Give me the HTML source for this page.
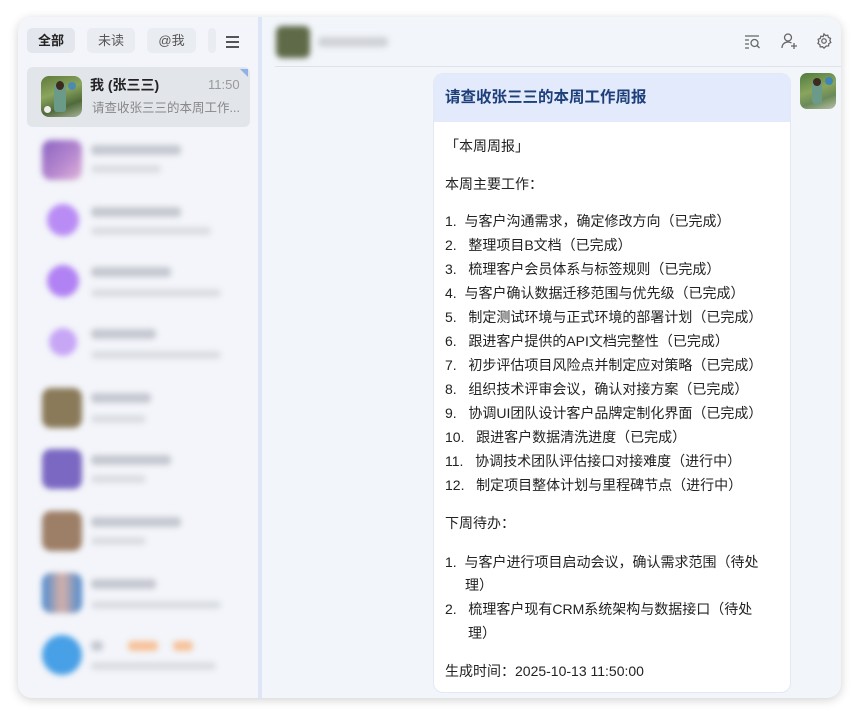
<!DOCTYPE html>
<html><head><meta charset="utf-8"><style>
*{margin:0;padding:0;box-sizing:border-box}
body{width:859px;height:716px;background:#fff;font-family:"Liberation Sans","Noto Sans CJK SC",sans-serif;position:relative;overflow:hidden}
.win{position:absolute;left:18px;top:17px;width:823px;height:681px;border-radius:14px;background:#f2f5fa;box-shadow:0 2px 10px rgba(0,0,0,.18);overflow:hidden}
.abs{position:absolute}
.tab{position:absolute;top:11px;height:25px;border-radius:5px;background:#e9ecf1;font-size:13px;color:#555;text-align:center;line-height:25px}
.bl{filter:blur(3px)}
.av{position:absolute;left:24px;width:40px;height:40px;border-radius:9px}
.ln1{position:absolute;left:73px;height:10px;border-radius:4px;background:#c5c8d0}
.ln2{position:absolute;left:73px;height:8px;border-radius:4px;background:#dadde3}
.t{position:absolute;font-size:14px;color:#222;white-space:nowrap;line-height:20px}
</style></head><body>
<div class="win">
  <div class="abs" style="left:0;top:0;width:240px;height:681px;background:#f3f5fa"></div>
  <div class="abs" style="left:240px;top:0;width:4px;height:681px;background:#dde5f7"></div>
  <div class="tab" style="left:9px;width:48px;background:#e3e6ec;color:#222;font-weight:bold">全部</div>
  <div class="tab" style="left:69px;width:48px">未读</div>
  <div class="tab" style="left:129px;width:49px">@我</div>
  <div class="tab" style="left:190px;width:8px"></div>
  <div class="abs" style="left:208px;top:19px;width:13px">
    <div style="height:1.5px;background:#555;margin-bottom:3.5px"></div><div style="height:1.5px;background:#555;margin-bottom:3.5px"></div><div style="height:1.5px;background:#555"></div>
  </div>
  <div class="abs" style="left:9px;top:50px;width:223px;height:60px;border-radius:6px;background:#e2e5ea"></div>
  <div class="abs" style="left:222px;top:52px;width:0;height:0;border-left:8px solid transparent;border-top:8px solid #8fb0e8"></div>
  <div class="abs" style="left:23px;top:59px;width:41px;height:41px;border-radius:8px;background:linear-gradient(160deg,#5e7a3c,#8aa55c 40%,#4f6a3a 70%,#a8b59a);overflow:hidden">
    <div class="abs" style="left:13px;top:6px;width:12px;height:30px;border-radius:6px 6px 3px 3px;background:#6c9a88"></div>
    <div class="abs" style="left:15px;top:5px;width:8px;height:9px;border-radius:50%;background:#3c2a20"></div>
    <div class="abs" style="left:27px;top:6px;width:8px;height:8px;border-radius:50%;background:#4c8ab0"></div>
    <div class="abs" style="left:3px;top:30px;width:7px;height:7px;border-radius:50%;background:#eee"></div>
  </div>
  <div class="abs" style="left:72px;top:58px;font-size:14px;font-weight:bold;color:#222">我 (张三三)</div>
  <div class="abs" style="left:190px;top:60px;font-size:13px;color:#999">11:50</div>
  <div class="abs" style="left:74px;top:80px;font-size:12.5px;color:#888">请查收张三三的本周工作...</div>
  <div class="bl">
    <div class="av" style="top:123px;background:linear-gradient(135deg,#8a63c0,#b98ad0 60%,#e0b8d8)"></div>
    <div class="ln1" style="top:128px;width:90px"></div><div class="ln2" style="top:148px;width:70px"></div>
    <div class="av" style="top:187px;left:29px;width:32px;height:32px;border-radius:50%;background:#b98cf5"></div>
    <div class="ln1" style="top:190px;width:90px"></div><div class="ln2" style="top:210px;width:120px"></div>
    <div class="av" style="top:248px;left:29px;width:32px;height:32px;border-radius:50%;background:#b182f3"></div>
    <div class="ln1" style="top:250px;width:80px"></div><div class="ln2" style="top:272px;width:130px"></div>
    <div class="av" style="top:311px;left:31px;width:28px;height:28px;border-radius:50%;background:#c7a6f6"></div>
    <div class="ln1" style="top:312px;width:65px"></div><div class="ln2" style="top:334px;width:130px"></div>
    <div class="av" style="top:371px;background:#8a7a5a"></div>
    <div class="ln1" style="top:376px;width:60px"></div><div class="ln2" style="top:398px;width:55px"></div>
    <div class="av" style="top:432px;background:#7b68c2"></div>
    <div class="ln1" style="top:438px;width:80px"></div><div class="ln2" style="top:458px;width:55px"></div>
    <div class="av" style="top:494px;background:#9d7f68"></div>
    <div class="ln1" style="top:500px;width:90px"></div><div class="ln2" style="top:520px;width:55px"></div>
    <div class="av" style="top:556px;background:linear-gradient(90deg,#4a8ad0,#d7b0a8 50%,#4a8ad0)"></div>
    <div class="ln1" style="top:562px;width:65px"></div><div class="ln2" style="top:584px;width:130px"></div>
    <div class="av" style="top:618px;border-radius:50%;background:#48a0e6"></div>
    <div class="ln1" style="top:624px;width:12px"></div>
    <div class="ln1" style="left:110px;top:624px;width:30px;background:#f7c29a"></div>
    <div class="ln1" style="left:155px;top:624px;width:20px;background:#f7c29a"></div>
    <div class="ln2" style="top:645px;width:125px"></div>
  </div>
  <div class="abs bl" style="left:258px;top:9px;width:34px;height:32px;border-radius:6px;background:#5e6a48"></div>
  <div class="abs bl" style="left:300px;top:20px;width:70px;height:10px;border-radius:4px;background:#cfd2d8"></div>
  <div class="abs" style="left:257px;top:49px;width:566px;height:1px;background:#dfe2e8"></div>
  <svg class="abs" style="left:725px;top:16px" width="20" height="18" viewBox="0 0 20 18" fill="none" stroke="#666" stroke-width="1.3">
    <path d="M2 3h14M2 7h4M2 11h4M2 15h4"/><circle cx="11.5" cy="10" r="3.5"/><path d="M14 12.5l2.5 2.5"/></svg>
  <svg class="abs" style="left:762px;top:15px" width="18" height="18" viewBox="0 0 18 18" fill="none" stroke="#666" stroke-width="1.3">
    <circle cx="8" cy="5.5" r="3.5"/><path d="M2 16c0-4 3-6 6-6 1.5 0 2.5.4 3.5 1"/><path d="M14 11v6M11 14h6"/></svg>
  <svg class="abs" style="left:797px;top:15px" width="18" height="18" viewBox="0 0 24 24" fill="none" stroke="#666" stroke-width="1.7">
    <circle cx="12" cy="12" r="3"/><path d="M12 2.5l2 2.3 3-.5.9 2.9 2.8 1.3-.9 2.9 1.3 2.6-2.6 1.5-.4 3-3 .2L12 21.5l-2-1.9-3 .2-.5-3-2.6-1.5 1.2-2.7-.9-2.8 2.8-1.3.9-2.9 3 .5z"/></svg>
  <div class="abs" style="left:782px;top:56px;width:36px;height:36px;border-radius:7px;background:linear-gradient(160deg,#4f7a40,#8aa55c 45%,#6a8a5a 70%,#b8c0a8);overflow:hidden">
    <div class="abs" style="left:12px;top:6px;width:10px;height:26px;border-radius:5px;background:#6c9a88"></div>
    <div class="abs" style="left:13px;top:5px;width:8px;height:8px;border-radius:50%;background:#3c2a20"></div>
    <div class="abs" style="left:25px;top:4px;width:8px;height:8px;border-radius:50%;background:#3f86b8"></div>
  </div>
  <div class="abs" style="left:415px;top:56px;width:358px;height:620px;border-radius:10px;background:#fff;overflow:hidden;border:1px solid #e3e8f3">
    <div style="height:48px;background:#e3eafc;padding-left:11px;line-height:48px;font-size:15.5px;font-weight:bold;color:#1d3f7a">请查收张三三的本周工作周报</div>
  </div>
  <div class="t" style="left:427px;top:119px">「本周周报」</div>
  <div class="t" style="left:427px;top:157px">本周主要工作：</div>
  <div class="t" style="left:427px;top:194px">1.&nbsp;&nbsp;与客户沟通需求，确定修改方向（已完成）</div>
  <div class="t" style="left:427px;top:218px">2.&nbsp;&nbsp; 整理项目B文档（已完成）</div>
  <div class="t" style="left:427px;top:242px">3.&nbsp;&nbsp; 梳理客户会员体系与标签规则（已完成）</div>
  <div class="t" style="left:427px;top:266px">4.&nbsp;&nbsp;与客户确认数据迁移范围与优先级（已完成）</div>
  <div class="t" style="left:427px;top:290px">5.&nbsp;&nbsp; 制定测试环境与正式环境的部署计划（已完成）</div>
  <div class="t" style="left:427px;top:314px">6.&nbsp;&nbsp; 跟进客户提供的API文档完整性（已完成）</div>
  <div class="t" style="left:427px;top:338px">7.&nbsp;&nbsp; 初步评估项目风险点并制定应对策略（已完成）</div>
  <div class="t" style="left:427px;top:362px">8.&nbsp;&nbsp; 组织技术评审会议，确认对接方案（已完成）</div>
  <div class="t" style="left:427px;top:386px">9.&nbsp;&nbsp; 协调UI团队设计客户品牌定制化界面（已完成）</div>
  <div class="t" style="left:427px;top:410px">10.&nbsp;&nbsp; 跟进客户数据清洗进度（已完成）</div>
  <div class="t" style="left:427px;top:434px">11.&nbsp;&nbsp; 协调技术团队评估接口对接难度（进行中）</div>
  <div class="t" style="left:427px;top:458px">12.&nbsp;&nbsp; 制定项目整体计划与里程碑节点（进行中）</div>
  <div class="t" style="left:427px;top:496px">下周待办：</div>
  <div class="t" style="left:427px;top:535px">1.&nbsp;&nbsp;与客户进行项目启动会议，确认需求范围（待处</div>
  <div class="t" style="left:447px;top:558px">理）</div>
  <div class="t" style="left:427px;top:582px">2.&nbsp;&nbsp; 梳理客户现有CRM系统架构与数据接口（待处</div>
  <div class="t" style="left:450px;top:606px">理）</div>
  <div class="t" style="left:427px;top:644px">生成时间：2025-10-13 11:50:00</div>
</div>
</body></html>
